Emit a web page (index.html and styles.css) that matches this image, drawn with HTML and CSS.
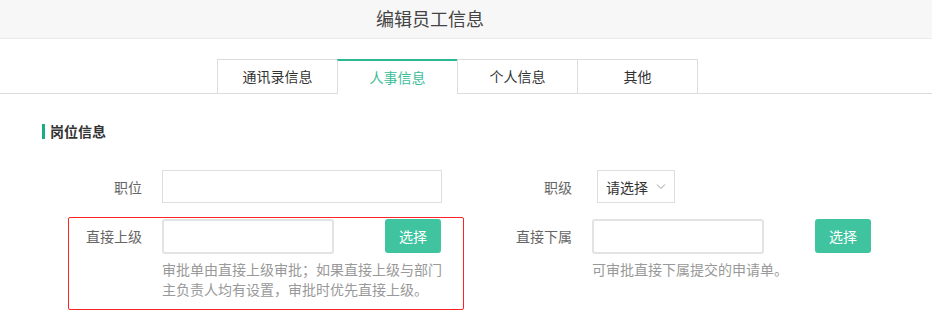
FILE: index.html
```html
<!DOCTYPE html>
<html lang="zh-CN">
<head>
<meta charset="utf-8">
<title>编辑员工信息</title>
<link rel="stylesheet" href="styles.css">
</head>
<body>
<header class="page-header">
  <h1 class="page-title">编辑员工信息</h1>
</header>
<nav class="tabs">
  <a class="tab">通讯录信息</a>
  <a class="tab active">人事信息</a>
  <a class="tab">个人信息</a>
  <a class="tab">其他</a>
</nav>
<main class="content">
  <h2 class="section-title">岗位信息</h2>
  <div class="form-grid">
    <div class="field">
      <label class="field-label">职位</label>
      <div class="control"><input class="text-input" type="text"></div>
    </div>
    <div class="field">
      <label class="field-label">职级</label>
      <div class="control">
        <div class="select">
          <span>请选择</span>
          <svg class="chevron" width="10" height="6" viewBox="0 0 10 6"><polyline points="1,0.5 5,4.5 9,0.5" fill="none" stroke="#999" stroke-width="1"/></svg>
        </div>
      </div>
    </div>
    <div class="field highlighted">
      <label class="field-label">直接上级</label>
      <div class="control">
        <div class="picker">
          <input class="picker-input" type="text">
          <button class="btn-select" type="button">选择</button>
        </div>
        <p class="help">审批单由直接上级审批；如果直接上级与部门主负责人均有设置，审批时优先直接上级。</p>
      </div>
      <span class="annotation"></span>
    </div>
    <div class="field">
      <label class="field-label">直接下属</label>
      <div class="control">
        <div class="picker">
          <input class="picker-input" type="text">
          <button class="btn-select" type="button">选择</button>
        </div>
        <p class="help">可审批直接下属提交的申请单。</p>
      </div>
    </div>
  </div>
</main>
</body>
</html>
```

FILE: styles.css
```css
* { box-sizing: border-box; }
html, body { min-height: 329px; }
body {
  margin: 0;
  background: #fff;
  font-family: "Noto Sans CJK SC", "Noto Sans", sans-serif;
  font-size: 14px;
  color: #333;
}
.page-header {
  height: 39px;
  background: #f7f7f7;
  border-bottom: 1px solid #ebebeb;
  padding-right: 72px;
  text-align: center;
}
.page-title {
  margin: 0;
  font-size: 18px;
  font-weight: normal;
  line-height: 37px;
  color: #444;
}
.tabs {
  display: flex;
  padding-left: 217px;
  padding-top: 20px;
  border-bottom: 1px solid #dcdcdc;
}
.tab {
  width: 120px;
  height: 34px;
  border-top: 1px solid #dcdcdc;
  border-left: 1px solid #dcdcdc;
  text-align: center;
  line-height: 33px;
  color: #333;
  background: #fff;
}
.tab:last-child {
  width: 121px;
  border-right: 1px solid #dcdcdc;
}
.tab.active {
  border-top: 2px solid #2bb893;
  color: #3bbd98;
  height: 35px;
  margin-bottom: -1px;
  line-height: 32px;
}
.content {
  padding-left: 42px;
  padding-bottom: 29px;
}
.section-title {
  margin: 30px 0 31px;
  font-size: 14px;
  font-weight: bold;
  line-height: 15px;
  height: 15px;
  border-left: 3px solid #1aad82;
  padding-left: 5px;
  color: #333;
}
.form-grid {
  display: grid;
  grid-template-columns: 430px 400px;
  row-gap: 15px;
}
.field {
  display: grid;
  grid-template-columns: 100px 280px;
  column-gap: 20px;
  align-items: start;
  position: relative;
}
.field-label {
  text-align: right;
  line-height: 34px;
  color: #666;
}
.text-input {
  display: block;
  width: 280px;
  height: 33px;
  border: 1px solid #dedede;
  outline: none;
  padding: 0 8px;
  font: inherit;
}
.select {
  margin-left: 5px;
  width: 78px;
  height: 33px;
  border: 1px solid #dedede;
  display: flex;
  align-items: center;
  justify-content: space-between;
  padding: 0 8px 0 8px;
  color: #333;
}
.chevron { display: block; }
.picker {
  display: flex;
  justify-content: space-between;
  align-items: flex-start;
  width: 279px;
}
.picker-input {
  display: block;
  width: 172px;
  height: 35px;
  border: 2px solid #e3e3e3;
  border-radius: 3px;
  outline: none;
  padding: 0 6px;
  font: inherit;
}
.btn-select {
  width: 56px;
  height: 34px;
  border: none;
  border-radius: 3px;
  background: #40c49f;
  color: #fff;
  font: inherit;
  font-size: 14px;
  padding: 0;
}
.help {
  margin: 6px 0 0;
  line-height: 19.5px;
  color: #999;
}
.annotation {
  position: absolute;
  top: -2px;
  left: 26px;
  width: 396px;
  height: 93px;
  border: 1px solid #f22;
  border-radius: 2px;
  pointer-events: none;
}
```
